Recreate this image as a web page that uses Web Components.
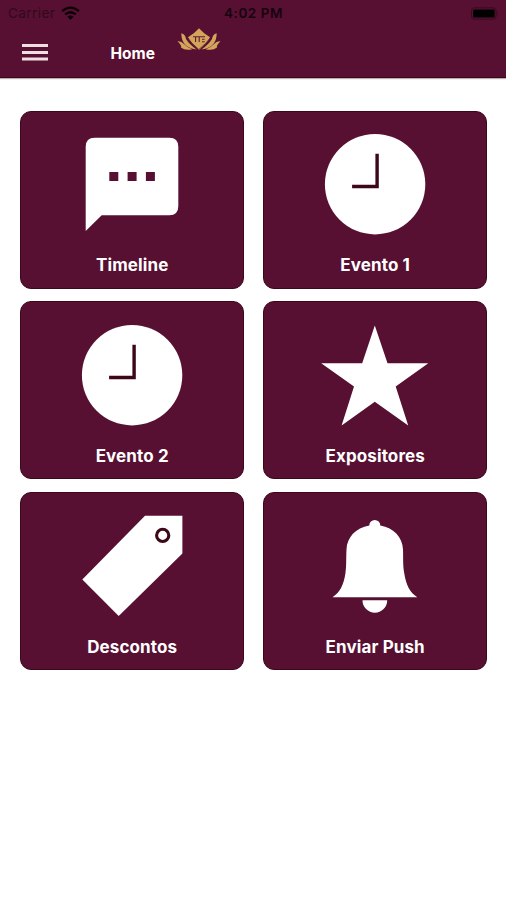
<!DOCTYPE html>
<html lang="pt-BR">
<head>
<meta charset="utf-8">
<title>Home</title>
<style>
  body {
    margin: 0;
    background: #fff;
    font-family: Inter, "Liberation Sans", sans-serif;
    --brand: #571032;
    --edge: #3d0716;
  }
</style>
</head>
<body>
<home-view></home-view>

<script>
const icons = {
  timeline: `
    <path fill="#fff" d="M22.7 16.7H97.3Q106.3 16.7 106.3 25.7V85.3Q106.3 94.3 97.3 94.3H29.7L13.7 109.9V25.7Q13.7 16.7 22.7 16.7Z"/>
    <path fill="var(--brand)" d="M37.3 50.9h9v9h-9zM55.6 50.9h9v9h-9zM73.9 50.9h9v9h-9z"/>
  `,
  clock: `
    <circle cx="60.1" cy="63.2" r="50.2" fill="#fff"/>
    <path fill="none" stroke="var(--edge)" stroke-width="3.4" d="M62.1 32.7V65.5H37.1"/>
  `,
  star: `
    <path fill="#fff" d="M59.8 13.6L72.5 51.2H113.3L80.7 74.5L93.2 113.4L59.8 89.7L26.6 113.4L39 74.5L6.2 51.2H47.2Z"/>
  `,
  tag: `
    <path fill="#fff" d="M73 12.8H110.4V50.6L46.7 113L10.3 76.4Z"/>
    <circle cx="90.7" cy="32.4" r="6.1" fill="none" stroke="var(--edge)" stroke-width="3.1"/>
  `,
  bell: `
    <path fill="#fff" d="M54.3 22.5A5.5 5.5 0 0 1 65.3 22.5C79 25.1 87.5 34.1 88 46.6C88.3 56.6 87.8 62.6 89.3 70.6C91 81.6 95 90.1 102.3 94.2H17.5C24.7 90.1 28.8 81.6 30.4 70.6C31.6 62.6 31 56.6 31.5 46.6C32 34.1 40.6 25.1 54.3 22.5Z"/>
    <path fill="#fff" d="M47.5 97.2H72.2A12.35 12.6 0 0 1 47.5 97.2Z"/>
  `,
};

const Tile = ({ icon, label }) => `
    <menu-tile icon="${icon}">${label}</menu-tile>
`;

class StatusBar extends HTMLElement {
  constructor() {
    super();
    this.attachShadow({ mode: 'open' });
    this.shadowRoot.innerHTML = `
      <style>
        :host {
          display: grid;
          grid-template-columns: 1fr auto 1fr;
          align-items: center;
          height: 27px;
          padding: 0 7px 0 8px;
          color: #16030d;
          font-size: 13.5px;
          line-height: 27px;
        }
        .carrier { display: flex; align-items: center; gap: 6px; color: #30091c; letter-spacing: 0.45px; }
        .carrier svg { margin-top: -2px; }
        .time { font-weight: 600; letter-spacing: 0.55px; }
        .battery { justify-self: end; margin-top: -1px; }
        svg { display: block; }
      </style>
      <div class="carrier">
        <span>Carrier</span>
        <svg width="19" height="14" viewBox="0 0 19 14" fill="none" stroke="#080004" stroke-width="2.3">
          <path d="M1.1 5.2Q9.5 -2 17.9 5.2M4.2 8.4Q9.5 4 14.8 8.4"/>
          <path fill="#080004" stroke="none" d="M6.4 10.7Q9.5 8.2 12.6 10.7L9.5 13.8Z"/>
        </svg>
      </div>
      <span class="time">4:02 PM</span>
      <svg class="battery" width="29" height="13" viewBox="0 0 29 13">
        <rect x="1.5" y=".8" width="24.6" height="11.4" rx="3" fill="none" stroke="#3a0920"/>
        <rect x="3.2" y="2.5" width="21.4" height="8" rx="1" fill="#000"/>
        <path d="M27.2 4.8Q29 6.5 27.2 8.2Z" fill="#3a0920"/>
      </svg>
    `;
  }
}

class LotusLogo extends HTMLElement {
  constructor() {
    super();
    this.attachShadow({ mode: 'open' });
    this.shadowRoot.innerHTML = `
      <style>
        :host { display: block; width: 44px; height: 23px; }
        svg { display: block; }
      </style>
      <svg width="44" height="23" viewBox="0 0 44 23">
        <g fill="#d3a45b">
          <path d="M22 .3Q26 5 33 9.3Q31 14.5 22 22Q13 14.5 11 9.3Q18 5 22 .3Z"/>
          <g id="petals">
            <path d="M4.3 5.2Q8.5 6.2 9 11Q12 16 19.6 21.6Q11 20.5 7.2 15.5Q4.3 11.5 4.3 5.2Z"/>
            <path d="M.5 13.2Q4.5 12.8 7 16Q10 19.3 15.3 21.3Q8 23 4 19.5Q5 17.5 .5 13.2Z"/>
          </g>
          <use href="#petals" transform="matrix(-1 0 0 1 44 0)"/>
        </g>
        <!-- monogram and the gaps between the petals -->
        <g fill="none" stroke="#5e1b2d" stroke-width="1.1">
          <path d="M16 8.8H28M18.6 8.8V14M22.2 8.8V14M25 11.3H27.6M25 13.7H27.6"/>
          <path stroke-width=".8" d="M10.4 9.5Q14.5 15.5 21.8 21.5Q29.5 15.5 33.6 9.5"/>
        </g>
      </svg>
    `;
  }
}

class NavBar extends HTMLElement {
  constructor() {
    super();
    this.attachShadow({ mode: 'open' });
    this.shadowRoot.innerHTML = `
      <style>
        :host {
          display: flex;
          align-items: flex-start;
          height: 50px;
          padding-left: 21.5px;
          color: #fff;
        }
        .burger { display: block; margin-top: 17px; }
        .title {
          margin: 17px 0 0 63px;
          width: 45px;
          font-size: 15.5px;
          font-weight: 700;
          line-height: 20px;
          letter-spacing: 0;
          white-space: nowrap;
        }
        lotus-logo { margin: 1px 0 0 21.5px; }
      </style>
      <svg class="burger" width="26" height="17" viewBox="0 0 26 17" fill="#efdfe0">
        <path d="M0 0h26v3H0zM0 6.9h26v3H0zM0 13.6h26v3H0z"/>
      </svg>
      <div class="title"><slot></slot></div>
      <lotus-logo></lotus-logo>
    `;
  }
}

class MenuTile extends HTMLElement {
  constructor() {
    super();
    this.attachShadow({ mode: 'open' });
  }

  connectedCallback() {
    this.shadowRoot.innerHTML = `
      <style>
        :host {
          display: flex;
          flex-direction: column;
          align-items: center;
          box-sizing: border-box;
          padding-top: 9.5px;
          border: 1px solid var(--edge);
          border-radius: 11px;
          background: var(--brand);
          color: #fff;
        }
        svg { display: block; flex: none; }
        .label {
          margin-top: 14.1px;
          font-size: 17px;
          font-weight: 700;
          line-height: 20px;
          letter-spacing: 0.12px;
          white-space: nowrap;
        }
      </style>
      <svg width="120" height="120" viewBox="0 0 120 120">${icons[this.getAttribute('icon')]}</svg>
      <div class="label"><slot></slot></div>
    `;
  }
}

class HomeView extends HTMLElement {
  constructor() {
    super();
    this.attachShadow({ mode: 'open' });
    this.shadowRoot.innerHTML = `
      <style>
        :host { display: block; min-height: 900px; }
        header {
          background: var(--brand);
          border-bottom: 1px solid var(--edge);
          box-shadow: 0 1px 1px #b9aeb0;
        }
        main {
          display: grid;
          grid-template-columns: 1fr 1fr;
          grid-auto-rows: 177.9px;
          gap: 12.9px 19.4px;
          padding: 32.7px 19px 0 20.4px;
        }
      </style>
      <header>
        <status-bar></status-bar>
        <nav-bar>Home</nav-bar>
      </header>
      <main>
        ${[
          { icon: 'timeline', label: 'Timeline' },
          { icon: 'clock', label: 'Evento 1' },
          { icon: 'clock', label: 'Evento 2' },
          { icon: 'star', label: 'Expositores' },
          { icon: 'tag', label: 'Descontos' },
          { icon: 'bell', label: 'Enviar Push' },
        ].map(Tile).join('')}
      </main>
    `;
  }
}

customElements.define('status-bar', StatusBar);
customElements.define('lotus-logo', LotusLogo);
customElements.define('nav-bar', NavBar);
customElements.define('menu-tile', MenuTile);
customElements.define('home-view', HomeView);
</script>
</body>
</html>
